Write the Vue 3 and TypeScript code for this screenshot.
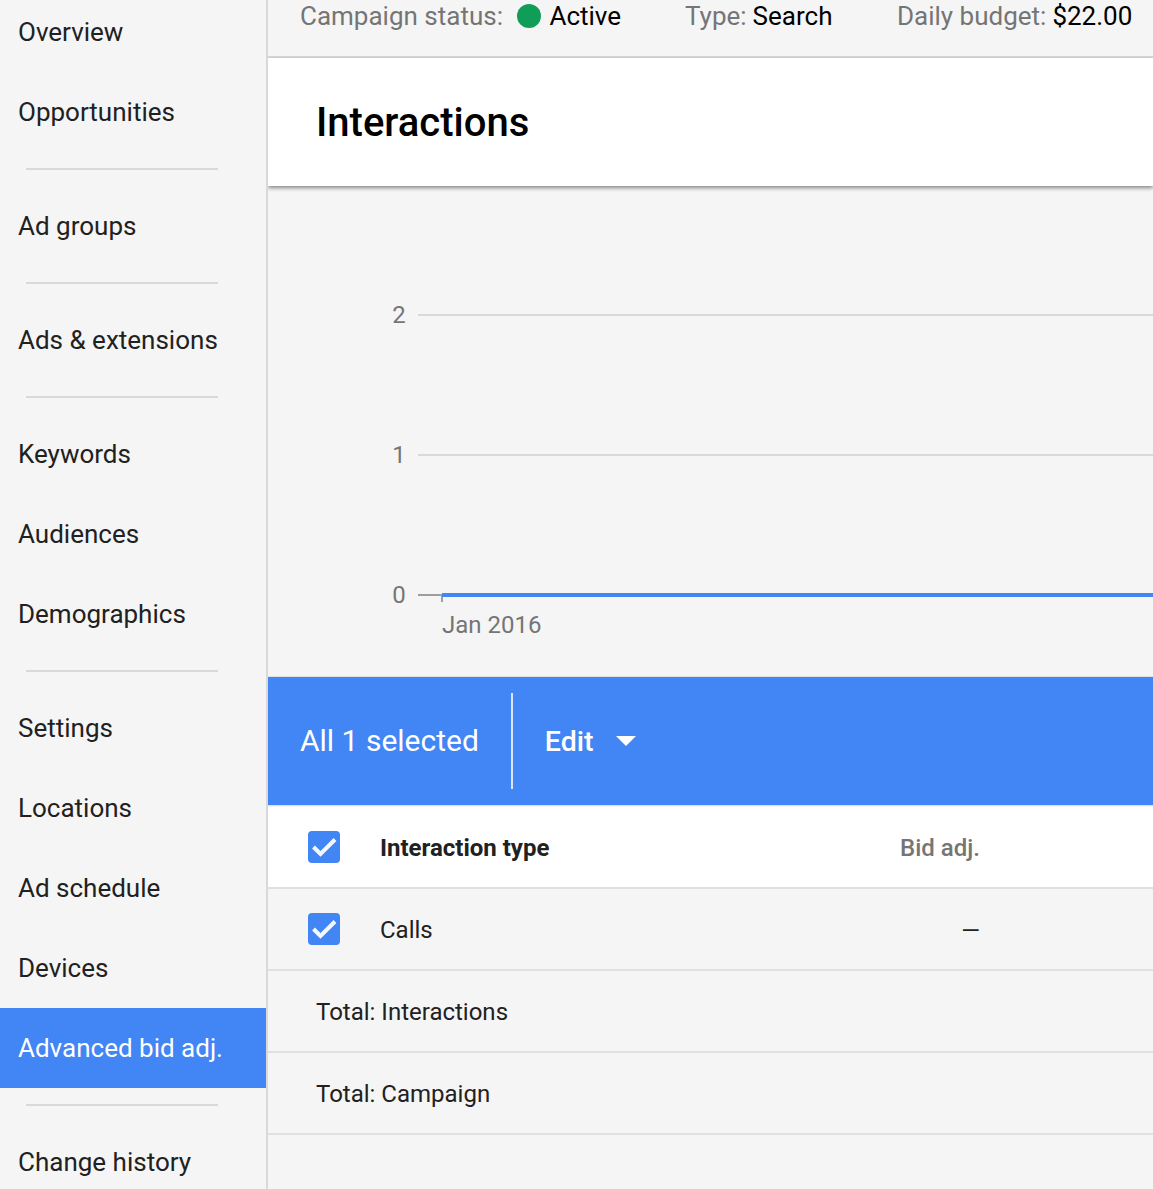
<script setup lang="ts">
interface NavItem { label: string; active?: boolean }
const groups: NavItem[][] = [
  [{ label: 'Overview' }, { label: 'Opportunities' }],
  [{ label: 'Ad groups' }],
  [{ label: 'Ads & extensions' }],
  [{ label: 'Keywords' }, { label: 'Audiences' }, { label: 'Demographics' }],
  [{ label: 'Settings' }, { label: 'Locations' }, { label: 'Ad schedule' }, { label: 'Devices' }, { label: 'Advanced bid adj.', active: true }],
  [{ label: 'Change history' }],
]
const totals = ['Total: Interactions', 'Total: Campaign']
</script>

<template>
  <div class="page">
    <nav class="sidebar">
      <template v-for="(group, i) in groups" :key="i">
        <div v-if="i > 0" class="divider"></div>
        <div v-for="item in group" :key="item.label" class="nav-item" :class="{ active: item.active }">{{ item.label }}</div>
      </template>
    </nav>
    <main class="main">
      <div class="statusbar">
        <span class="stat status"><span class="muted">Campaign status:</span><i class="dot"></i><span>Active</span></span>
        <span class="stat type"><span class="muted">Type:</span><span>Search</span></span>
        <span class="stat budget"><span class="muted">Daily budget:</span><span>$22.00</span></span>
      </div>
      <header class="title-card"><h1>Interactions</h1></header>
      <section class="chart">
        <svg class="chart-svg" width="885" height="490" viewBox="0 0 885 490">
          <g class="grid">
            <line x1="150" y1="129" x2="885" y2="129" />
            <line x1="150" y1="269" x2="885" y2="269" />
          </g>
          <line class="tick" x1="150" y1="409" x2="175" y2="409" />
          <line class="tick" x1="174" y1="409" x2="174" y2="416" />
          <line class="series" x1="174" y1="409" x2="885" y2="409" />
          <text class="label" x="131" y="137" text-anchor="middle">2</text>
          <text class="label" x="131" y="277" text-anchor="middle">1</text>
          <text class="label" x="131" y="417" text-anchor="middle">0</text>
          <text class="label" x="174" y="447">Jan 2016</text>
        </svg>
      </section>
      <div class="actionbar">
        <span class="selected"><span class="selected-text">All 1 selected</span></span>
        <span class="edit">Edit<i class="caret"></i></span>
      </div>
      <div class="row head">
        <span class="check"><svg viewBox="0 0 32 32" width="32" height="32"><path d="M5.5 16l7 7L27 8.5" /></svg></span>
        <span class="name strong">Interaction type</span>
        <span class="bid strong muted">Bid adj.</span>
      </div>
      <div class="row">
        <span class="check"><svg viewBox="0 0 32 32" width="32" height="32"><path d="M5.5 16l7 7L27 8.5" /></svg></span>
        <span class="name">Calls</span>
        <span class="bid dash">—</span>
      </div>
      <div v-for="t in totals" :key="t" class="row total">{{ t }}</div>
    </main>
  </div>
</template>

<style scoped>
.page {
  display: flex;
  width: 1153px;
  height: 1189px;
  overflow: hidden;
  background: #f5f5f5;
  font-family: Roboto, "Liberation Sans", sans-serif;
  color: #212121;
}
.sidebar {
  box-sizing: content-box;
  flex: 0 0 266px;
  height: 1300px;
  margin-top: -8px;
  border-right: 2px solid #d9d9d9;
  background: #f5f5f5;
  position: relative;
  z-index: 1;
}
.nav-item {
  height: 80px;
  padding-left: 18px;
  line-height: 80px;
  font-size: 26px;
  white-space: nowrap;
}
.nav-item.active { background: #4285f4; color: #fff; }
.divider {
  height: 2px;
  margin: 16px 48px 16px 26px;
  background: #d9d9d9;
}
.main { flex: 1; min-width: 0; display: flex; flex-direction: column; }
.statusbar {
  display: flex;
  align-items: center;
  height: 32px;
  padding: 0 0 24px 32px;
  border-bottom: 2px solid #d9d9d9;
  font-size: 26px;
  color: #000;
  white-space: nowrap;
}
.muted { color: #757575; }
.stat { display: inline-flex; align-items: center; gap: 6px; }
.status { width: 385px; gap: 0; }
.type { width: 212px; }
.dot {
  width: 24px;
  height: 24px;
  margin: 0 8.5px 0 14px;
  border-radius: 50%;
  background: #0f9d58;
}
.title-card {
  height: 128px;
  display: flex;
  align-items: center;
  padding-left: 48px;
  background: #fff;
  box-shadow: 0 2px 4px rgba(0, 0, 0, 0.45);
  position: relative;
}
h1 { margin: 0; font-size: 40px; font-weight: 500; color: #000; }
.chart { height: 490px; }
.chart-svg { display: block; }
.grid line { stroke: #d9d9d9; stroke-width: 2; }
.tick { stroke: #9e9e9e; stroke-width: 2; }
.series { stroke: #4285f4; stroke-width: 4; }
.label { font-size: 24px; fill: #757575; font-family: Roboto, "Liberation Sans", sans-serif; }
.actionbar {
  display: flex;
  align-items: center;
  height: 128px;
  margin-top: 1px;
  background: #4285f4;
  box-shadow: 0 -1px 0 #e0e0e0, 0 1px 0 #e0e0e0;
  color: #fff;
  position: relative;
}
.selected {
  display: flex;
  align-items: center;
  height: 96px;
  padding: 0 32px;
  border-right: 2px solid #d9e6fc;
  font-size: 30px;
}
.selected-text { margin-bottom: 2px; }
.edit {
  display: flex;
  align-items: center;
  padding-left: 32px;
  font-size: 28.5px;
  font-weight: 500;
}
.caret {
  margin-left: 22.5px;
  width: 0;
  height: 0;
  border-left: 10px solid transparent;
  border-right: 10px solid transparent;
  border-top: 10px solid #fff;
}
.row {
  display: flex;
  align-items: center;
  box-sizing: border-box;
  height: 82px;
  padding: 2px 0 0 40px;
  border-bottom: 2px solid #e0e0e0;
  font-size: 24px;
}
.head { margin-top: 2px; background: #fff; }
.check {
  flex: none;
  width: 32px;
  height: 32px;
  margin-top: -2px;
  border-radius: 4px;
  background: #4285f4;
}
.check svg { display: block; }
.check path { fill: none; stroke: #fff; stroke-opacity: 0.95; stroke-width: 4; }
.name { width: 520px; margin-left: 40px; }
.bid { width: 79px; text-align: right; white-space: nowrap; }
.dash { width: 80px; padding-top: 2px; }
.strong { font-weight: 700; }
.bid.muted { font-weight: 500; }
.total { padding-left: 48px; }
</style>
